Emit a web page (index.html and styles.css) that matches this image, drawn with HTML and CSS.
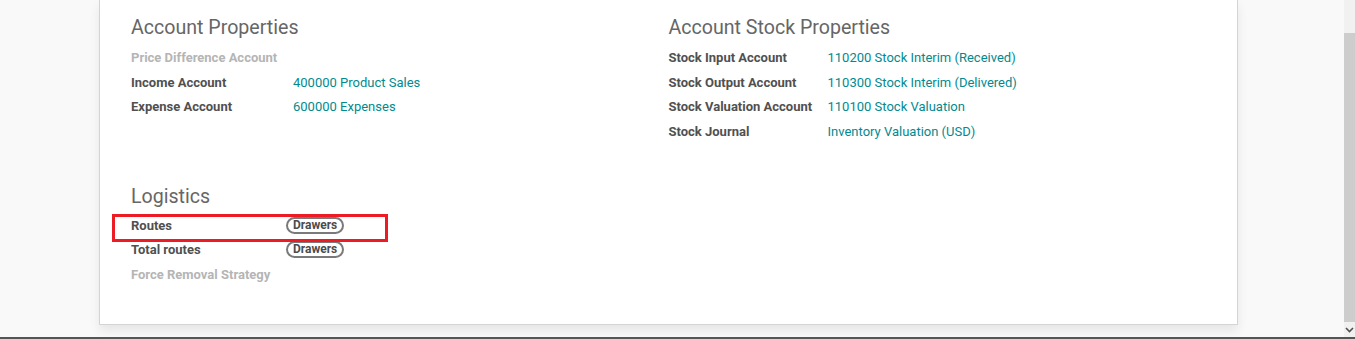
FILE: index.html
```
<!DOCTYPE html>
<html lang="en">
<head>
    <meta charset="UTF-8">
    <title>Product - Inventory</title>
    <link rel="stylesheet" href="styles.css">
</head>
<body>
    <div class="window">
        <div class="main">
            <div class="sheet">
                <div class="groups">
                    <div class="group">
                        <div class="group-title">Account Properties</div>
                        <div class="field">
                            <span class="label muted">Price Difference Account</span>
                        </div>
                        <div class="field">
                            <span class="label">Income Account</span>
                            <a class="value">400000 Product Sales</a>
                        </div>
                        <div class="field">
                            <span class="label">Expense Account</span>
                            <a class="value">600000 Expenses</a>
                        </div>
                    </div>
                    <div class="group">
                        <div class="group-title">Account Stock Properties</div>
                        <div class="field">
                            <span class="label">Stock Input Account</span>
                            <a class="value">110200 Stock Interim (Received)</a>
                        </div>
                        <div class="field">
                            <span class="label">Stock Output Account</span>
                            <a class="value">110300 Stock Interim (Delivered)</a>
                        </div>
                        <div class="field">
                            <span class="label">Stock Valuation Account</span>
                            <a class="value">110100 Stock Valuation</a>
                        </div>
                        <div class="field">
                            <span class="label">Stock Journal</span>
                            <a class="value">Inventory Valuation (USD)</a>
                        </div>
                    </div>
                </div>

                <div class="group logistics">
                    <div class="group-title">Logistics</div>
                    <div class="field highlighted">
                        <span class="label">Routes</span>
                        <span class="tag">Drawers</span>
                    </div>
                    <div class="field">
                        <span class="label">Total routes</span>
                        <span class="tag">Drawers</span>
                    </div>
                    <div class="field">
                        <span class="label muted">Force Removal Strategy</span>
                    </div>
                </div>
            </div>
        </div>

        <div class="scrollbar">
            <div class="track"></div>
            <div class="thumb"></div>
            <div class="arrow">
                <svg width="11" height="8" viewBox="0 0 11 8">
                    <path d="M2 2 L5.5 5.5 L9 2" fill="none" stroke="#505050" stroke-width="1.6"/>
                </svg>
            </div>
        </div>
    </div>
    <div class="taskbar"></div>
</body>
</html>
```

FILE: styles.css
```
body {
    margin: 0;
    padding: 0;
    height: 339px;
    overflow: hidden;
    background: #f9f9f9;
    font-family: 'Roboto', 'Liberation Sans', sans-serif;
    display: flex;
    flex-direction: column;
}

.window {
    flex: 1;
    display: flex;
    min-height: 0;
}

.main {
    flex: 1;
    padding-left: 99px;
}

.sheet {
    width: 1075px;
    background: #fff;
    border: 1px solid #d4d4d4;
    border-top: none;
    padding: 14px 31px 37px 31px;
    box-shadow: 0 6px 10px rgba(0, 0, 0, 0.08);
}

.groups {
    display: grid;
    grid-template-columns: 1fr 1fr;
}

.group-title {
    font-size: 19.6px;
    color: #666;
    line-height: 27px;
    margin-bottom: 4px;
}

.field {
    display: flex;
    align-items: center;
    height: 24.7px;
    font-size: 13px;
}

.label {
    width: 162px;
    flex-shrink: 0;
    font-weight: bold;
    color: #505050;
}

.group:last-child .label {
    width: 159px;
}

.label.muted {
    color: #b5b5b5;
}

.value {
    color: #018a8f;
    text-decoration: none;
}

.logistics {
    margin-top: 39px;
}

.logistics .group-title {
    margin-bottom: 3px;
}

.tag {
    font-size: 12px;
    font-weight: bold;
    color: #4c4c4c;
    border: 2px solid #7a7a7a;
    border-radius: 9px;
    padding: 0 5px;
    line-height: 13px;
    margin-left: -4px;
}

.highlighted {
    position: relative;
}

.highlighted::after {
    content: "";
    position: absolute;
    left: -19px;
    top: 1px;
    width: 270px;
    height: 22px;
    border: 3px solid #ed1c24;
}

.scrollbar {
    width: 11px;
    display: flex;
    flex-direction: column;
    background: #f1f1f1;
}

.track {
    height: 33px;
}

.thumb {
    flex: 1;
    background: #cdcdcd;
}

.arrow {
    height: 15px;
    display: flex;
    justify-content: center;
    align-items: center;
}

.taskbar {
    height: 2px;
    background: #555;
}
```
